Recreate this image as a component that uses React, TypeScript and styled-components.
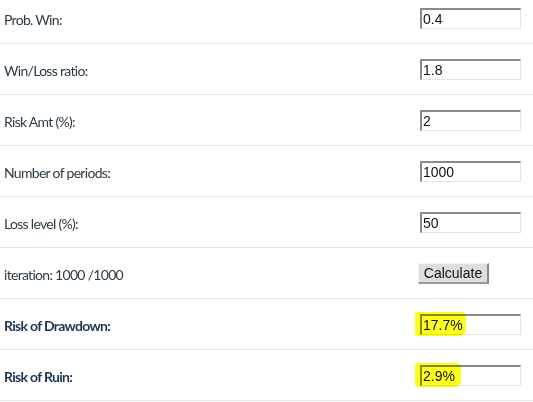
import React from "react";
import styled, { createGlobalStyle } from "styled-components";

const GlobalStyle = createGlobalStyle`
  html, body {
    margin: 0;
    padding: 0;
    background: #ffffff;
    overflow: hidden;
  }
`;

const Table = styled.div`
  display: flex;
  flex-direction: column;
  width: 533px;
  margin-top: -7px;
  font-family: Lato, "Open Sans", sans-serif;
`;

const Row = styled.div`
  display: grid;
  grid-template-columns: 1fr 102px;
  align-items: center;
  height: 51px;
  box-sizing: border-box;
  padding: 0 11px 0 4px;
  border-bottom: 1px solid #e6e6e6;
`;

const Label = styled.div<{ $strong?: boolean }>`
  font-size: 14px;
  letter-spacing: -0.7px;
  padding-top: 2px;
  color: ${(p) => (p.$strong ? "#1c3450" : "#2d3b45")};
  font-weight: ${(p) => (p.$strong ? 700 : 400)};
`;

const Cell = styled.div`
  position: relative;
  display: flex;
  align-items: center;
  height: 22px;
`;

const Field = styled.input`
  box-sizing: border-box;
  width: 101px;
  height: 21px;
  margin: 0;
  padding: 0 1px;
  font-family: "Liberation Sans", Arial, sans-serif;
  font-size: 14px;
  color: #111;
  background: transparent;
  border-style: solid;
  border-width: 2px 1px 1px 2px;
  border-color: #8a8a8a #e4e4e4 #e4e4e4 #8a8a8a;
  outline: none;
`;

const Button = styled.button`
  box-sizing: border-box;
  width: 71px;
  height: 21px;
  margin: 0 0 0 -2px;
  padding: 0;
  font-family: "Liberation Sans", Arial, sans-serif;
  font-size: 14px;
  color: #111;
  background: #dedede;
  border-style: solid;
  border-width: 1px 2px 2px 1px;
  border-color: #f2f2f2 #8a8a8a #9a9a9a #f2f2f2;
`;

const Highlight = styled.span<{ $w: number }>`
  position: absolute;
  left: -5px;
  top: -1px;
  width: ${(p) => p.$w}px;
  height: 24px;
  background: #fbff1e;
  border-radius: 3px 5px 6px 3px;
  mix-blend-mode: multiply;
  pointer-events: none;
`;

type Item = {
  label: string;
  value?: string;
  strong?: boolean;
  mark?: number;
  button?: boolean;
};

const items: Item[] = [
  { label: "Prob. Win:", value: "0.4" },
  { label: "Win/Loss ratio:", value: "1.8" },
  { label: "Risk Amt (%):", value: "2" },
  { label: "Number of periods:", value: "1000" },
  { label: "Loss level (%):", value: "50" },
  { label: "iteration: 1000 /1000", button: true },
  { label: "Risk of Drawdown:", value: "17.7%", strong: true, mark: 51 },
  { label: "Risk of Ruin:", value: "2.9%", strong: true, mark: 46 },
];

export default function App() {
  return (
    <>
      <GlobalStyle />
      <Table>
        {items.map((it) => (
          <Row key={it.label}>
            <Label $strong={it.strong}>{it.label}</Label>
            <Cell>
              {it.button ? (
                <Button type="button">Calculate</Button>
              ) : (
                <Field type="text" defaultValue={it.value} readOnly={!!it.mark} />
              )}
              {it.mark && <Highlight $w={it.mark} />}
            </Cell>
          </Row>
        ))}
      </Table>
    </>
  );
}
